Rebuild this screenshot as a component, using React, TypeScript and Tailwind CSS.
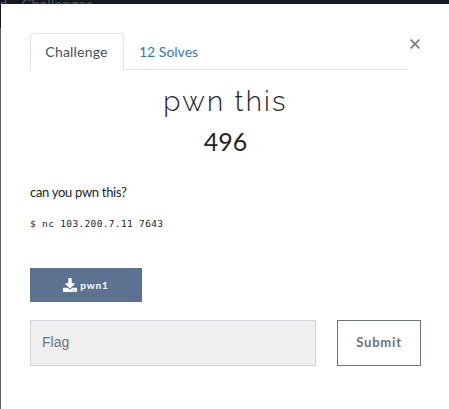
import { FaDownload } from "react-icons/fa";

export default function App() {
  return (
    <div className="flex h-[409px] w-[449px] flex-col overflow-hidden bg-[#606060] font-['Lato',sans-serif] text-[#212529]">
      <header className="flex h-1 shrink-0 items-start gap-[14px] overflow-hidden bg-[#161a1f] text-[15px] leading-4 text-[#50545a]">
        <span className="-ml-px -mt-1">d</span>
        <span className="-mt-1">Challenges</span>
      </header>
      <div className="flex min-h-0 flex-1">
        <div className="w-px shrink-0">
          <div className="h-6 bg-[#161a1f]" />
        </div>
        <main className="flex-1 bg-white pl-[29px] pr-7 pt-[29px]">
          <div className="flex">
            <nav className="flex h-[37px] w-[378px] border-b border-[#dee2e6] text-[14px] leading-[37px]">
              <button className="h-[37px] w-[94px] rounded-t border border-b-0 border-[#dee2e6] bg-white pr-px text-center leading-[36px] tracking-[0.2px] text-[#495057]">
                Challenge
              </button>
              <button className="ml-[15px] text-left leading-[37px] text-[#337ab7]">12 Solves</button>
            </nav>
            <button aria-label="Close" className="ml-[2px] mt-[5.5px] h-[10px] w-[10px] text-[#7f7f7f]">
              <svg viewBox="0 0 10 10" className="h-[10px] w-[10px]" fill="none" stroke="currentColor" strokeWidth="1.9">
                <path d="M.7.7 9.3 9.3M9.3.7.7 9.3" />
              </svg>
            </button>
          </div>
          <h2 className="mt-[14px] text-center font-['Raleway','Lato_Light','Lato',sans-serif] text-[28px] font-light leading-9 tracking-[2.2px]">
            pwn this
          </h2>
          <h3 className="mt-[3px] text-center text-[25px] leading-9">496</h3>
          <p className="mt-[23px] text-[13px] leading-5 tracking-[-0.3px]">can you pwn this?</p>
          <pre className="mt-[14px] font-['DejaVu_Sans_Mono',monospace] text-[9.5px] leading-4 tracking-[0.34px]">$ nc 103.200.7.11 7643</pre>
          <button className="mt-[36px] flex h-[34px] w-28 items-center justify-center gap-[3px] bg-[#5b7290] text-[10px] font-bold tracking-[0.8px] text-white">
            <FaDownload size={14} />
            <span className="pt-px">pwn1</span>
          </button>
          <div className="mt-[18px] flex gap-[21px]">
            <input
              placeholder="Flag"
              className="h-[46px] w-[286px] border border-[#ced4da] bg-[#efefef] px-[11px] pb-0.5 font-['Liberation_Sans',Arial,sans-serif] text-[14px] placeholder:text-[#6c757d]"
            />
            <button className="h-[46px] w-[84px] border border-[#6c757d] text-[13px] font-bold tracking-[0.8px] text-[#6c757d]">
              Submit
            </button>
          </div>
        </main>
      </div>
    </div>
  );
}
